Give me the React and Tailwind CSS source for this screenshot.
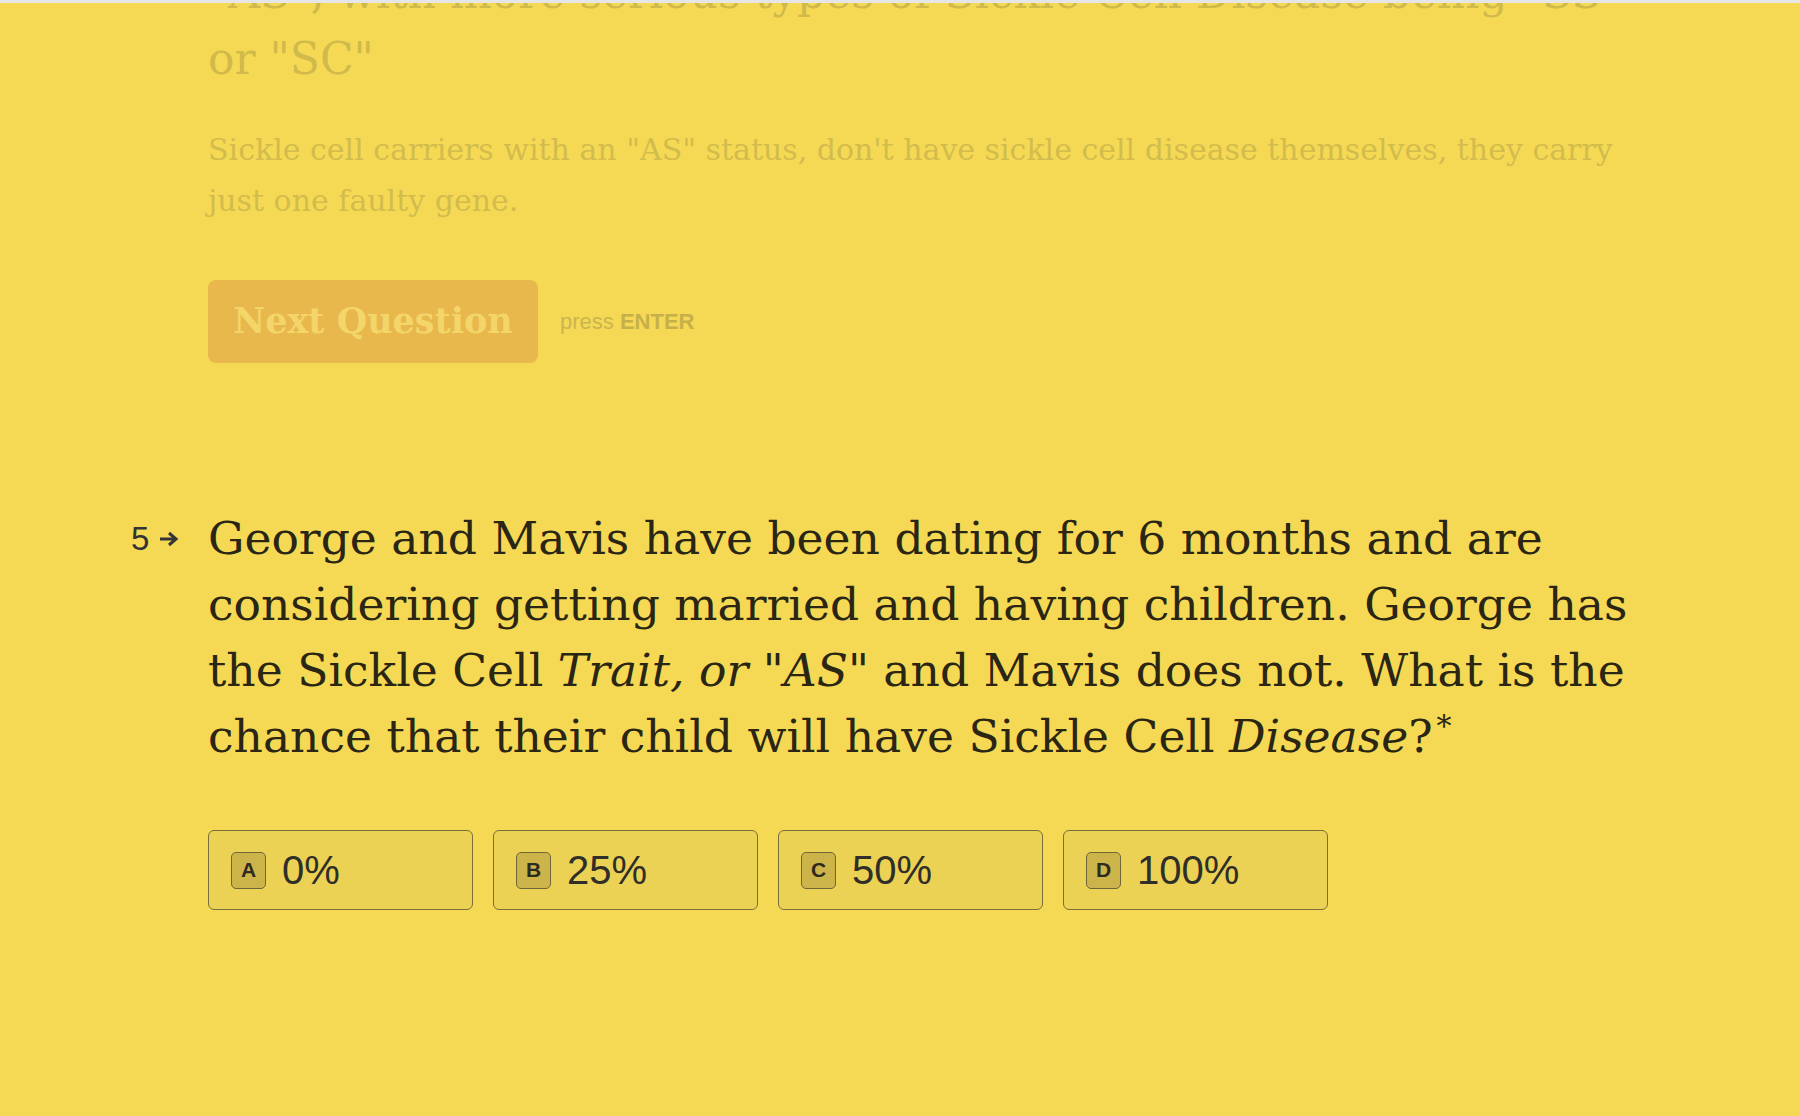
const options = [
    { key: "A", label: "0%" },
    { key: "B", label: "25%" },
    { key: "C", label: "50%" },
    { key: "D", label: "100%" },
];

const slab = { fontFamily: '"DejaVu Serif", serif' };
const sans = { fontFamily: '"Liberation Sans", Arial, sans-serif' };

const App = () => {
    return (
        <div className="min-h-screen bg-[#f5d955]">
            <div className="h-[3px] bg-[#e6e6e6]" />

            <div className="h-[1113px] overflow-hidden">
                <div className="pl-[130px] w-[1650px]">
                    {/* Previous question, faded out */}
                    <div className="pl-[78px] -mt-[43px]">
                        <h2 className="text-[44px] leading-[66px] text-[#d0ba4a]" style={slab}>
                            "AS", with more serious types of Sickle Cell Disease being "SS" or "SC"
                        </h2>
                        <p className="mt-[32px] w-[1442px] text-[30px] leading-[51px] text-[#d2bc4c]" style={slab}>
                            Sickle cell carriers with an "AS" status, don't have sickle cell disease themselves, they carry just one faulty gene.
                        </p>
                        <div className="mt-[54px] flex items-center gap-[22px]">
                            <button className="w-[330px] h-[83px] rounded-[8px] bg-[#e8b84c] text-[#f3d56a] text-[35px] font-bold" style={slab}>
                                Next Question
                            </button>
                            <span className="text-[22px] text-[#cbb54e]" style={sans}>
                                press <span className="font-bold text-[#c6b04a]">ENTER</span>
                            </span>
                        </div>
                    </div>

                    {/* Current question */}
                    <div className="mt-[143px] flex">
                        <div className="w-[78px] h-[66px] flex items-center gap-[10px] text-[#333]">
                            <span className="text-[33px] pl-[1px]" style={sans}>5</span>
                            <svg width="20" height="16" viewBox="0 0 20 16" fill="none" stroke="#333" strokeWidth="3">
                                <path d="M1 8h15" />
                                <path d="M10 2l7 6-7 6" />
                            </svg>
                        </div>
                        <div className="w-[1440px]">
                            <h1 className="text-[45.6px] leading-[66px] text-[#2a2613]" style={slab}>
                                George and Mavis have been dating for 6 months and are considering getting married and having children. George has the Sickle Cell <em>Trait, or "AS"</em> and Mavis does not. What is the chance that their child will have Sickle Cell <em>Disease</em>?<span className="relative -top-[16px] ml-[4px] text-[30px] leading-none">*</span>
                            </h1>

                            <div className="mt-[60px] flex gap-[20px]">
                                {options.map(opt => (
                                    <div
                                        key={opt.key}
                                        className="w-[265px] h-[80px] flex items-center gap-[16px] pl-[22px] border border-[#7a6e3b] rounded-[6px] bg-[#ebd254]"
                                    >
                                        <span
                                            className="w-[35px] h-[37px] flex items-center justify-center rounded-[5px] border-[1.5px] border-[#6f6537] bg-[#ccb44b] text-[21px] font-bold text-[#2e2b1e]"
                                            style={sans}
                                        >
                                            {opt.key}
                                        </span>
                                        <span className="text-[40px] text-[#2f2e28]" style={sans}>{opt.label}</span>
                                    </div>
                                ))}
                            </div>
                        </div>
                    </div>
                </div>
            </div>
        </div>
    );
};

export default App;
